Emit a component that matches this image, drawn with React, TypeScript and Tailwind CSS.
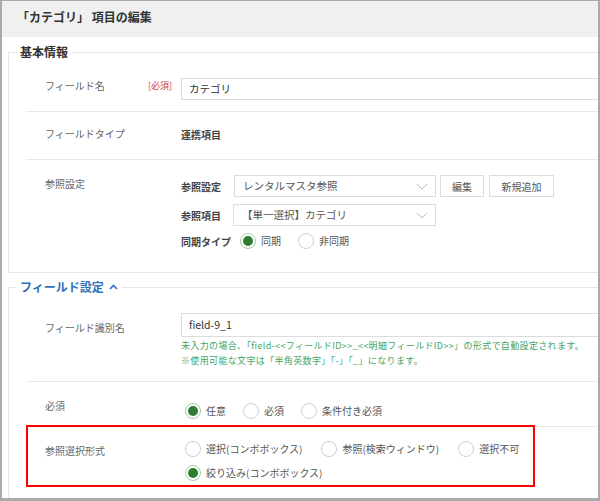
import React from 'react';

const Radio: React.FC<{ checked?: boolean; label: string }> = ({ checked, label }) => (
  <span className="inline-flex items-center gap-[5px]">
    {checked ? (
      <span className="w-4 h-4 rounded-full border border-[#9fcf9f] bg-white flex items-center justify-center shrink-0">
        <span className="w-[10px] h-[10px] rounded-full bg-[#2e7d32]" />
      </span>
    ) : (
      <span className="w-4 h-4 rounded-full border border-[#cfcfcf] bg-white shrink-0" />
    )}
    <span className="text-[10px] leading-4 text-[#555] whitespace-nowrap">{label}</span>
  </span>
);

const Chevron = () => (
  <svg width="12" height="7" viewBox="0 0 12 7" fill="none" className="shrink-0">
    <path d="M1 1l5 5 5-5" stroke="#bbb" strokeWidth="1" />
  </svg>
);

const Select: React.FC<{ value: string; width: string }> = ({ value, width }) => (
  <div className={`${width} h-[22px] border border-[#dcdcdc] bg-white flex items-center justify-between pl-[8px] pr-[7px]`}>
    <span className="text-[10.5px] text-[#555] whitespace-nowrap">{value}</span>
    <Chevron />
  </div>
);

const Label: React.FC<{ children: React.ReactNode }> = ({ children }) => (
  <span className="text-[10px] leading-4 text-[#666] whitespace-nowrap">{children}</span>
);

export default function App() {
  return (
    <div className="w-[600px] h-[501px] overflow-hidden bg-white border-t border-x-2 border-b-[3px] border-[#a9a9a9] font-['Noto_Sans_CJK_JP','Meiryo',sans-serif]">
      <div className="h-[36px] bg-[#f0f0f0] pl-[15px] pt-[8px]">
        <h1 className="text-[12px] leading-4 font-bold text-[#333]">「カテゴリ」 項目の編集</h1>
      </div>

      <fieldset className="mt-[6px] ml-[6px] w-[640px] border border-[#e6e6e6] pb-[5px]">
        <legend className="ml-[7px] px-[4px] text-[12px] leading-[18px] font-bold text-[#333]">基本情報</legend>

        <div className="ml-[17px] border-b border-[#e8e8e8] flex pt-[17px] pb-[11px]">
          <div className="w-[155px] pl-[19px] pr-[9px] flex justify-between">
            <Label>フィールド名</Label>
            <span className="text-[9px] leading-4 text-[#d04040]">[必須]</span>
          </div>
          <div className="flex-1 h-[22px] border border-[#dcdcdc] flex items-center pl-[7px]">
            <span className="text-[10.5px] text-[#333]">カテゴリ</span>
          </div>
        </div>

        <div className="ml-[17px] border-b border-[#e8e8e8] flex h-[48px]">
          <div className="w-[155px] pl-[19px] pt-[7px]">
            <Label>フィールドタイプ</Label>
          </div>
          <div className="pt-[15px] text-[10px] leading-4 font-bold text-[#444]">連携項目</div>
        </div>

        <div className="ml-[17px] flex pb-[18px]">
          <div className="w-[155px] pl-[19px] pt-[9px]">
            <Label>参照設定</Label>
          </div>
          <div className="pt-[15px] flex flex-col gap-[7px]">
            <div className="flex items-center">
              <span className="w-[53px] text-[10px] font-bold text-[#444]">参照設定</span>
              <Select value="レンタルマスタ参照" width="w-[202px]" />
              <button className="ml-[4px] w-[44px] h-[22px] border border-[#dcdcdc] bg-white text-[10px] text-[#555]">編集</button>
              <button className="ml-[5px] w-[65px] h-[22px] border border-[#dcdcdc] bg-white text-[10px] text-[#555]">新規追加</button>
            </div>
            <div className="flex items-center">
              <span className="w-[52px] text-[10px] font-bold text-[#444]">参照項目</span>
              <Select value="【単一選択】カテゴリ" width="w-[203px]" />
            </div>
            <div className="flex items-center">
              <span className="w-[59px] text-[10px] font-bold text-[#444]">同期タイプ</span>
              <div className="flex gap-[17px]">
                <Radio checked label="同期" />
                <Radio label="非同期" />
              </div>
            </div>
          </div>
        </div>
      </fieldset>

      <fieldset className="mt-[5px] ml-[6px] w-[640px] border border-[#e6e6e6] pb-[20px]">
        <legend className="ml-[7px] px-[4px] text-[12px] leading-[18px] font-bold text-[#3071b9] flex items-center gap-[5px]">
          フィールド設定
          <svg width="9" height="6" viewBox="0 0 9 6" fill="none">
            <path d="M1 5l3.5-3.5L8 5" stroke="#3071b9" strokeWidth="1.6" />
          </svg>
        </legend>

        <div className="ml-[17px] border-b border-[#e8e8e8] flex pt-[17px] pb-[13px]">
          <div className="w-[155px] pl-[19px]">
            <Label>フィールド識別名</Label>
          </div>
          <div className="flex-1">
            <div className="h-[24px] border border-[#dcdcdc] flex items-center pl-[7px]">
              <span className="text-[10.5px] text-[#333]">field-9_1</span>
            </div>
            <p className="mt-[1px] text-[9px] leading-[15px] tracking-[0.35px] text-[#3fa45f] whitespace-nowrap">
              未入力の場合、「field-&lt;&lt;フィールドID&gt;&gt;_&lt;&lt;明細フィールドID&gt;&gt;」の形式で自動設定されます。
            </p>
            <p className="text-[9px] leading-[15px] tracking-[0.35px] text-[#3fa45f] whitespace-nowrap">
              ※使用可能な文字は「半角英数字」「-」「_」になります。
            </p>
          </div>
        </div>

        <div className="ml-[17px] border-b border-[#e8e8e8] flex h-[45px]">
          <div className="w-[155px] pl-[19px] pt-[9px]">
            <Label>必須</Label>
          </div>
          <div className="pt-[13px] pl-[4px] flex gap-[17px]">
            <Radio checked label="任意" />
            <Radio label="必須" />
            <Radio label="条件付き必須" />
          </div>
        </div>

        <div className="ml-[17px] -mt-[2px] w-[509px] border-2 border-[#ff0000] flex pb-[4px]">
          <div className="w-[153px] pl-[17px] pt-[9px]">
            <Label>参照選択形式</Label>
          </div>
          <div className="pt-[14px] pl-[4px] flex flex-col gap-[8px]">
            <div className="flex gap-[19px]">
              <Radio label="選択(コンボボックス)" />
              <Radio label="参照(検索ウィンドウ)" />
              <Radio label="選択不可" />
            </div>
            <Radio checked label="絞り込み(コンボボックス)" />
          </div>
        </div>
      </fieldset>
    </div>
  );
}
